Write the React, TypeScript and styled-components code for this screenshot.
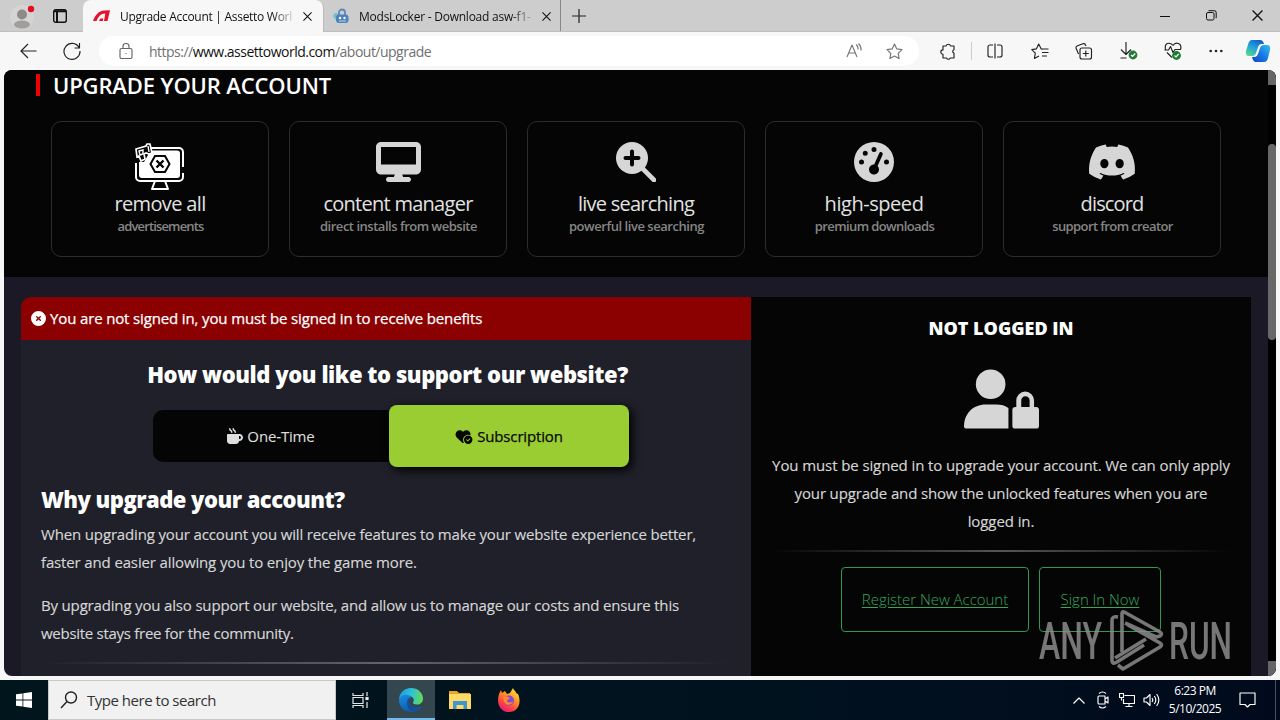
import type { ReactNode } from "react"
import styled, { createGlobalStyle } from "styled-components"
import { FaCircleXmark, FaDesktop, FaDiscord, FaGaugeHigh, FaHeartCircleCheck, FaMugHot } from "react-icons/fa6"

export default function App(){
    return(
        <Screen>
            <GlobalStyle />
            <TabStrip />
            <Toolbar />
            <Viewport>
                <Page>
                    <Hero>
                        <HeroTitle>UPGRADE YOUR ACCOUNT</HeroTitle>
                        <Features>
                            {features.map(item => (
                                <Feature key={item.title}>
                                    <FeatureIcon>{item.icon}</FeatureIcon>
                                    <FeatureTitle $ls={item.ls}>{item.title}</FeatureTitle>
                                    <FeatureText $ls={item.subLs}>{item.text}</FeatureText>
                                </Feature>
                            ))}
                        </Features>
                    </Hero>
                    <Columns>
                        <Support />
                        <Account />
                    </Columns>
                </Page>
                <Scrollbar>
                    <ScrollCap />
                    <ScrollThumb />
                    <ScrollCap />
                </Scrollbar>
                <Watermark />
            </Viewport>
            <Taskbar />
        </Screen>
    )
}

function TabStrip(){
    return(
        <Strip>
            <StripSlot $w={44}>
                <svg width="26" height="28" viewBox="0 0 26 28">
                    <circle cx="13" cy="15" r="12" fill="#d6d4d2" />
                    <circle cx="13" cy="12.5" r="5" fill="#8e8a88" />
                    <ellipse cx="13" cy="22.5" rx="8" ry="4" fill="#a09d9b" />
                    <circle cx="22" cy="7" r="3.2" fill="#e01020" />
                </svg>
            </StripSlot>
            <StripSlot $w={32}>
                <svg width="16" height="16" viewBox="0 0 16 16" fill="none" stroke="#111" strokeWidth="1.4">
                    <rect x="1.7" y="1.7" width="12.6" height="12.6" rx="2" />
                    <path d="M2 3.3h12M5 3v11" strokeWidth="2" />
                </svg>
            </StripSlot>
            <Tab $active>
                <svg width="17" height="12" viewBox="0 0 17 12" fill="#e8112d">
                    <path d="M0 11C2 5 6 .6 11 .4L17 .2l-2.500 10.800h-3.500l1.300-7.400C8 3.400 5.400 6.500 3.600 11z" />
                    <path d="M6 11l1.300-2.500h3l-.5 2.500z" />
                </svg>
                <TabTitle $ls="-0.28px">Upgrade Account | Assetto Worl</TabTitle>
                <CloseIcon size={9} />
            </Tab>
            <Tab>
                <svg width="16" height="16" viewBox="0 0 16 16">
                    <path d="M2 5l4 1v7l-4-2-2-3z" fill="#62c4c6" />
                    <path d="M6 7V4.5a3 3 0 0 1 6 0V7" fill="none" stroke="#5b87b8" strokeWidth="1.8" />
                    <rect x="3" y="6.5" width="12.5" height="8.5" rx="3" fill="#4d82bd" />
                    <circle cx="7" cy="10" r="1.2" fill="#fff" />
                    <circle cx="11.5" cy="10" r="1.2" fill="#fff" />
                    <path d="M6 13h7" stroke="#b9d7ec" />
                </svg>
                <TabTitle $ls="-0.24px">ModsLocker - Download asw-f1-</TabTitle>
                <CloseIcon size={9} />
            </Tab>
            <StripSlot $w={36}>
                <svg width="14" height="14" viewBox="0 0 14 14" stroke="#222" strokeWidth="1.2"><path d="M7 0v14M0 7h14" /></svg>
            </StripSlot>
            <Spacer />
            <StripSlot $w={46}>
                <svg width="10" height="10" viewBox="0 0 10 10" stroke="#111"><path d="M0 5.5h10" /></svg>
            </StripSlot>
            <StripSlot $w={46}>
                <svg width="11" height="11" viewBox="0 0 11 11" fill="none" stroke="#111">
                    <rect x=".5" y="2.5" width="7.5" height="7.5" rx="1.5" />
                    <path d="M2.5 .7h5.5a2 2 0 0 1 2.2 2.2v5.3" />
                </svg>
            </StripSlot>
            <StripSlot $w={46}><CloseIcon size={11} /></StripSlot>
        </Strip>
    )
}

function Toolbar(){
    return(
        <Bar>
            <Slot $w={44}><Line w={17} h={16} d="M16.5 8H1M8 1L1 8l7 7" /></Slot>
            <Slot $w={44}><Line w={18} h={18} d="M16 5.5A8 8 0 1 0 17 9M16.5 1v5h-5" /></Slot>
            <Address>
                <Line w={14} h={16} color="#666" d="M2.5 5.5h9a1.5 1.5 0 0 1 1.5 1.5v7a1.5 1.5 0 0 1-1.5 1.5h-9A1.5 1.5 0 0 1 1 14V7a1.5 1.5 0 0 1 1.5-1.5zM4 5.5V3.500a3 3 0 0 1 6 0v2M6.500 10.500h1" />
                <Url>https://<b>www.assettoworld.com</b>/about/upgrade</Url>
                <Slot $w={40}><Line w={17} h={16} color="#777" d="M1 14L6 2l5 12M3 10h6M10 1.5q2.5 2 2 5M12.5.5q3 3 2.5 7" /></Slot>
                <Slot $w={40}><Line w={17} h={17} color="#777" d="M8.5 1l2.3 4.9 5.2.7-3.8 3.7.9 5.3-4.6-2.5-4.6 2.5.9-5.3L1 6.6l5.2-.7z" /></Slot>
            </Address>
            <Slot $w={44}><Line w={17} h={17} d="M3 3h3.2a2.2 2.2 0 0 1 4.3 0H14v3.8a1.7 1.7 0 0 0 0 3.3V15h-3.8a2 2 0 0 1-3.7 0H3v-3.7a2.2 2.2 0 0 1 0-4.4z" /></Slot>
            <Separator />
            <Slot $w={45}><Line w={16} h={16} d="M6 2H3a2 2 0 0 0-2 2v8a2 2 0 0 0 2 2h3M10 2h3a2 2 0 0 1 2 2v8a2 2 0 0 1-2 2h-3M8 .5v15" /></Slot>
            <Slot $w={45}><Line w={18} h={17} d="M11.5 6.200l-1.300-.3L7.700 1 5.300 5.900.8 6.600l3.500 3.600-.9 5.200L8 13M11 6h6.500M11 9.500h6.500M11 13h5" /></Slot>
            <Slot $w={44}><Line w={18} h={17} d="M3.500 11L1 5a2 2 0 0 1 1-2l6-2.300a2 2 0 0 1 2.500 1.200L11 3M7 5h7.500a2 2 0 0 1 2 2v7a2 2 0 0 1-2 2H7a2 2 0 0 1-2-2V7a2 2 0 0 1 2-2zM10.800 7.500v6M7.800 10.500h6" /></Slot>
            <Slot $w={46}>
                <Line w={20} h={18} d="M7 0v12M2 7.500l5 5 5-5M1.500 16h6"><Check cx={14} cy={13} /></Line>
            </Slot>
            <Slot $w={41}>
                <Line w={18} h={18} d="M9 3.500Q6.500.5 3.500 1.500T1.500 7.500M16.500 7.500Q18 3 14.500 1.500T9 3.500M.5 8h4l2-3.500 2.500 6L11 7.500h6M3 10.500l5 5"><Check cx={12.5} cy={13.5} /></Line>
            </Slot>
            <Slot $w={45}><svg width="14" height="4" fill="#222"><circle cx="1.7" cy="2" r="1.3" /><circle cx="7" cy="2" r="1.3" /><circle cx="12.3" cy="2" r="1.3" /></svg></Slot>
            <Slot $w={40}>
                <svg width="26" height="24" viewBox="0 0 26 24">
                    <defs>
                        <linearGradient id="cop1" x1="0.8" y1="0" x2="0.2" y2="1"><stop stopColor="#1857c0" /><stop offset=".5" stopColor="#1ea3dc" /><stop offset="1" stopColor="#5bd68e" /></linearGradient>
                        <linearGradient id="cop2" x1="1" y1="0" x2="0" y2="1"><stop stopColor="#30c5f0" /><stop offset=".5" stopColor="#1878e8" /><stop offset="1" stopColor="#1048bd" /></linearGradient>
                    </defs>
                    <path d="M7 1h8q3 0 4 4h-3q-2 0-3 3l-2 6q-1 3-4 3H4Q0 17 1 12L3.500 4Q4.500 1 7 1z" fill="url(#cop1)" />
                    <path d="M19 23h-8q-3 0-4-5h3q2 0 3-3l2-6q1-3 4-3h3q4 0 3 5l-2 8q-1 4-4 4z" fill="url(#cop2)" />
                </svg>
            </Slot>
        </Bar>
    )
}

function Support(){
    return(
        <SupportPanel>
            <Alert><FaCircleXmark size={15} /><span>You are not signed in, you must be signed in to receive benefits</span></Alert>
            <SupportTitle>How would you like to support our website?</SupportTitle>
            <Options>
                <Option><FaMugHot size={16} /><span>One-Time</span></Option>
                <Option $selected><HeartIcon /><span>Subscription</span></Option>
            </Options>
            <WhyTitle>Why upgrade your account?</WhyTitle>
            <Paragraph>
                <Sentence $ls="-0.15px">When upgrading your account you will receive features to make your website experience better,</Sentence>
                <Sentence $ls="-0.14px">faster and easier allowing you to enjoy the game more.</Sentence>
            </Paragraph>
            <Paragraph>
                <Sentence $ls="-0.17px">By upgrading you also support our website, and allow us to manage our costs and ensure this</Sentence>
                <Sentence $ls="-0.28px">website stays free for the community.</Sentence>
            </Paragraph>
            <Divider $color="#62636b" />
        </SupportPanel>
    )
}

function Account(){
    return(
        <AccountPanel>
            <AccountTitle>NOT LOGGED IN</AccountTitle>
            <LockedUser />
            <AccountText>
                <Sentence $ls="-0.1px">You must be signed in to upgrade your account. We can only apply</Sentence>
                <Sentence $ls="-0.15px">your upgrade and show the unlocked features when you are</Sentence>
                <Sentence $ls="-0.08px">logged in.</Sentence>
            </AccountText>
            <Divider $color="#555" />
            <Links>
                <LinkButton $w={188} href="#">Register New Account</LinkButton>
                <LinkButton $w={122} href="#">Sign In Now</LinkButton>
            </Links>
        </AccountPanel>
    )
}

function Taskbar(){
    return(
        <Tasks>
            <TaskSlot $w={48}>
                <svg width="16" height="16" viewBox="0 0 16 16" fill="#fff"><path d="M0 2.300L6.500 1.400v6.200H0zM7.300 1.300L16 0v7.600H7.300zM0 8.400h6.500v6.200L0 13.700zM7.300 8.400H16V16l-8.700-1.300z" /></svg>
            </TaskSlot>
            <SearchBox>
                <svg width="18" height="18" viewBox="0 0 18 18" fill="none" stroke="#222" strokeWidth="1.4"><circle cx="11" cy="6.5" r="5.5" /><path d="M7 10.500L1 17" /></svg>
                <span>Type here to search</span>
            </SearchBox>
            <TaskSlot $w={48}>
                <svg width="17" height="17" viewBox="0 0 17 17" fill="none" stroke="#e6e6e6" strokeWidth="1.2">
                    <path d="M1 1v2.500h10V1M1 16v-2.500h10V16M1 5.500h10v6H1zM15 0v4M15 10v6" /><rect x="14" y="5.5" width="2" height="2" fill="#fff" />
                </svg>
            </TaskSlot>
            <TaskSlot $w={48} $active>
                <svg width="24" height="24" viewBox="0 0 24 24">
                    <defs>
                        <linearGradient id="edge1" x1="0" y1="0.5" x2="1" y2="0.6"><stop stopColor="#1f9be0" /><stop offset=".5" stopColor="#2fc2d8" /><stop offset="1" stopColor="#66dc4f" /></linearGradient>
                        <linearGradient id="edge2" x1="0" y1="0" x2="0.5" y2="1"><stop stopColor="#1b8fe0" /><stop offset="1" stopColor="#0d58ae" /></linearGradient>
                    </defs>
                    <path d="M0 12C0 5 5 0 12 0s12 5 12 10.500c0 4-3 6-6 6-2.500 0-4.500-1-4-2 2-3 0-6-4-6.500C6 7.500 1 9 0 12z" fill="url(#edge1)" />
                    <path d="M0 12c1-4 5-6 9-5 2 .5 3 1.500 3 2.500-3 2-3 6 0 8.500 3 2 7 2 9.500.5.5 0 .8.3.5.7C20 22 16.500 24 12.500 24 5 24 0 18.500 0 12z" fill="url(#edge2)" />
                    <path d="M8 14c0-2.500 1.500-4 3.500-4.500-2.500 3-1.500 7 1.500 9 2.500 1.500 6 1.500 8.500 0-2.500 3.500-6 5-9 4.500C9.500 22 8 18 8 14z" fill="#134f97" />
                </svg>
            </TaskSlot>
            <TaskSlot $w={49}>
                <svg width="22" height="20" viewBox="0 0 22 20">
                    <path d="M0 1h8l2 2h11v5H0z" fill="#e8a720" />
                    <path d="M0 4h22v15H0z" fill="#ffd968" />
                    <path d="M4 11h14v8h-3.500v-4h-7v4H4z" fill="#3f94d2" />
                </svg>
            </TaskSlot>
            <TaskSlot $w={49}>
                <svg width="24" height="24" viewBox="0 0 24 24">
                    <defs><linearGradient id="fox" x1="0.9" y1="0" x2="0.3" y2="1"><stop stopColor="#fff04a" /><stop offset=".4" stopColor="#ff9a22" /><stop offset=".75" stopColor="#ff4242" /><stop offset="1" stopColor="#e31b7c" /></linearGradient></defs>
                    <path d="M2 6l2-4 1 3 3-2 2 3 3-1 3-5c1 3 3 3 3 5l2 1c4 9 0 18-9 18S-1 15 2 6z" fill="url(#fox)" />
                    <circle cx="12" cy="12.5" r="5" fill="#8548dc" />
                    <path d="M6 9c4-1 5 0 7 1-1 2-3 1-3 3 1 2 4 2 6 0-1 5-8 5-9 0z" fill="#ff8b2c" />
                </svg>
            </TaskSlot>
            <Spacer />
            <TaskSlot $w={24}><Line w={12} h={7} color="#fff" d="M.5 6.500L6 1l5.500 5.500" /></TaskSlot>
            <TaskSlot $w={24}><Line w={14} h={18} color="#fff" d="M3 5h6v8H3q-1 0-1-1V6q0-1 1-1zM9 8l3-2v6l-3-2M3 2.500q3.500-3 7 0M3 15.500q3.500 3 7 0" /></TaskSlot>
            <TaskSlot $w={24}><Line w={16} h={16} color="#fff" d="M5.500 3.500H15.500V11.500H4.500V7M10 11.500v3M6.500 14.500h7M.5 1.500h4v4h-4zM2.500 5.500v3" /></TaskSlot>
            <TaskSlot $w={24}><Line w={17} h={14} color="#fff" d="M1 5h2.500L7 1.500v11L3.500 9H1zM9 5q1.500 2 0 4M11.300 3q3 4 0 8M13.600 1q4.500 6 0 12" /></TaskSlot>
            <Clock>
                <span>6:23 PM</span>
                <span>5/10/2025</span>
            </Clock>
            <TaskSlot $w={45}><Line w={17} h={16} color="#fff" d="M1 1h15v11.500h-5L8.500 15 6 12.500H1z" /></TaskSlot>
            <DesktopEdge />
        </Tasks>
    )
}

function Line({ w, h, d, color = "#222", children }: { w: number, h: number, d: string, color?: string, children?: ReactNode }){
    return(
        <svg width={w} height={h} viewBox={`0 0 ${w} ${h}`} fill="none" stroke={color} strokeWidth="1.15" strokeLinejoin="round">
            <path d={d} />
            {children}
        </svg>
    )
}

function Check({ cx, cy }: { cx: number, cy: number }){
    return(
        <g>
            <circle cx={cx} cy={cy} r="4.4" fill="#1e7b34" stroke="none" />
            <path d={`M${cx - 2} ${cy}l1.500 1.500 2.700-3`} stroke="#fff" />
        </g>
    )
}

function CloseIcon({ size }: { size: number }){
    return <svg width={size} height={size} viewBox="0 0 10 10" stroke="#111" strokeWidth="1.2"><path d="M.5.5l9 9M9.500.5l-9 9" /></svg>
}

function NoAdsIcon(){
    return(
        <svg width="50" height="47" viewBox="0 0 50 47" fill="none">
            <path d="M16 5h28a4 4 0 0 1 4 4v15M48 30v4a4 4 0 0 1-4 4H5a4 4 0 0 1-4-4V20" stroke="#fff" strokeWidth="2" />
            <path d="M17 7.500h25a3 3 0 0 1 3 3V32a3 3 0 0 1-3 3H7a3 3 0 0 1-3-3V19l5 0 4-7z" fill="#fff" />
            <path d="M20 38l-3 8h16l-3-8" stroke="#fff" strokeWidth="2" strokeLinejoin="round" />
            <path d="M20 13h10l4.500 8-4.500 8H20l-4.500-8z" stroke="#050505" strokeWidth="2" />
            <path d="M21.500 17.500l7 7M28.500 17.500l-7 7" stroke="#050505" strokeWidth="2.4" />
            <path d="M1 6l10-3 1-2 3 0 2 9-3 1-3-1-2 1 1 5-4 2-2-5-2 1z" fill="#050505" stroke="#fff" strokeWidth="1.7" />
            <path d="M4 8l4-1v4l-3 1zM13 3l1 6" stroke="#fff" strokeWidth="1.4" />
        </svg>
    )
}

function SearchPlusIcon(){
    return(
        <svg width="40" height="40" viewBox="0 0 40 40">
            <circle cx="16" cy="16" r="16" fill="currentColor" />
            <path d="M27 27l11 11" stroke="currentColor" strokeWidth="4.6" strokeLinecap="round" />
            <path d="M16 9.500v13M9.500 16h13" stroke="#050505" strokeWidth="4" strokeLinecap="round" />
        </svg>
    )
}

function LockedUser(){
    return(
        <svg width="75" height="60" viewBox="0 0 76 60" fill="#d6d6d6">
            <circle cx="27" cy="15" r="15" />
            <path d="M22 35.500h11q7 0 12 3.500v21H2q-2 0-2-2.500C0 45 9 35.500 22 35.500z" />
            <path d="M53 38v-6.500a9 9 0 0 1 18 0V38h2q3 0 3 3v16q0 3-3 3H52q-3 0-3-3V41q0-3 3-3zM58 38h8.500v-6.500a4.250 4.250 0 0 0-8.500 0z" />
        </svg>
    )
}

function Watermark(){
    return(
        <Mark width="196" height="62" viewBox="0 0 196 62">
            <text x="0" y="49" textLength="63" lengthAdjust="spacingAndGlyphs">ANY</text>
            <text x="130" y="49" textLength="63" lengthAdjust="spacingAndGlyphs">RUN</text>
            <g fill="none" stroke="currentColor" strokeWidth="3.6" strokeLinejoin="round">
                <path d="M79 7q-6-1-6 3v40q0 5 5 2l27-17" />
                <path d="M83 42V4q0-4 4-1l34 19q3 2 0 4l-4 1L86 13" />
                <path d="M79 55l5 4 37-22q3-2 0-4L89 15" />
                <path d="M76 48l31-19" />
            </g>
        </Mark>
    )
}

const GlobalStyle = createGlobalStyle`
    * {
        box-sizing: border-box;
    }

    body {
        margin: 0;
        overflow: hidden;
    }

    svg {
        flex-shrink: 0;
    }
`

const Screen = styled.div`
    display: flex;
    flex-direction: column;
    width: 1280px;
    height: 720px;
    overflow: hidden;
    background: #f7f7f7;
    font-family: "Open Sans", "Noto Sans", sans-serif;
    white-space: nowrap;
`

const Spacer = styled.div`
    flex: 1;
`

const Strip = styled.div`
    display: flex;
    height: 32px;
    background: #cdcdcd;
    border-bottom: 1px solid #bfbfbf;
`

const StripSlot = styled.div<{ $w: number }>`
    display: flex;
    align-items: center;
    justify-content: center;
    width: ${p => p.$w}px;
`

const Tab = styled.div<{ $active?: boolean }>`
    display: flex;
    align-items: center;
    gap: 10px;
    width: ${p => p.$active ? 241 : 237}px;
    height: ${p => p.$active ? 32 : 31}px;
    margin-left: ${p => p.$active ? 7 : 0}px;
    padding: ${p => p.$active ? "0 11px 0 10px" : "1px 9px 0"};
    background: ${p => p.$active ? "#f7f7f7" : "#cdcdcd"};
    border-radius: ${p => p.$active ? "8px 8px 0 0" : "0 0 0 8px"};
    border-right: 1px solid ${p => p.$active ? "#bbb" : "#888"};
`

const TabTitle = styled.span<{ $ls: string }>`
    flex: 1;
    font-size: 12px;
    letter-spacing: ${p => p.$ls};
    color: #111;
    mask-image: linear-gradient(90deg, #000 88%, transparent 102%);
`

const Bar = styled.div`
    display: flex;
    align-items: center;
    height: 38px;
    padding-left: 6px;
`

const Slot = styled.div<{ $w: number }>`
    display: flex;
    align-items: center;
    justify-content: center;
    width: ${p => p.$w}px;
`

const Separator = styled.div`
    width: 1px;
    height: 18px;
    margin-left: 1px;
    background: #ccc;
`

const Address = styled.div`
    display: flex;
    align-items: center;
    width: 820px;
    height: 30px;
    margin: 0 7px 0 5px;
    padding: 0 5px 0 20px;
    border-radius: 15px;
    background: #fff;
`

const Url = styled.span`
    flex: 1;
    margin-left: 16px;
    font-size: 14px;
    letter-spacing: -0.51px;
    color: #707070;

    b {
        color: #111;
        font-weight: 400;
    }
`

const Viewport = styled.main`
    display: flex;
    position: relative;
    width: 1272px;
    height: 606px;
    margin: 0 4px 4px;
    border-radius: 8px;
    overflow: hidden;
    background: #1a1925;
`

const Page = styled.div`
    width: 1264px;
`

const Hero = styled.section`
    height: 207px;
    padding: 4px 47px 0 32px;
    background: #050505;
`

const HeroTitle = styled.h1`
    height: 22px;
    margin: 0;
    padding-left: 13px;
    border-left: 4px solid #f00000;
    font-size: 22px;
    line-height: 22px;
    font-weight: 600;
    letter-spacing: -0.13px;
    color: #fff;
`

const Features = styled.div`
    display: flex;
    gap: 20px;
    margin: 25px 0 0 15px;
`

const Feature = styled.div`
    display: flex;
    flex-direction: column;
    align-items: center;
    width: 218px;
    height: 136px;
    padding-top: 20px;
    border: 1px solid #2c2c2c;
    border-radius: 10px;
`

const FeatureIcon = styled.div`
    display: flex;
    align-items: center;
    justify-content: center;
    height: 40px;
    color: #d6d6d6;
`

const NoAds = styled.div`
    height: 47px;
    margin-top: 9px;
`

const DesktopIcon = styled(FaDesktop)`
    width: 45px;
    height: 40px;
`

const DiscordIcon = styled(FaDiscord)`
    width: 50px;
    height: 40px;
`

const HeartIcon = styled(FaHeartCircleCheck)`
    width: 18px;
    height: 15px;
`

const FeatureTitle = styled.div<{ $ls: string }>`
    margin-top: 8px;
    font-size: 20px;
    line-height: 28px;
    letter-spacing: ${p => p.$ls};
    color: #e2e2e2;
`

const FeatureText = styled.div<{ $ls: string }>`
    padding-left: 1px;
    font-size: 13px;
    line-height: 16px;
    font-weight: 600;
    letter-spacing: ${p => p.$ls};
    color: #868686;
`

const Columns = styled.div`
    display: flex;
    height: 420px;
    padding: 20px 17px 0;
`

const SupportPanel = styled.section`
    display: flex;
    flex-direction: column;
    width: 730px;
    border-radius: 10px 0 0 0;
    overflow: hidden;
    background: #1f2029;
`

const Alert = styled.div`
    display: flex;
    align-items: center;
    gap: 4px;
    height: 43px;
    padding-left: 10px;
    background: #8b0000;
    color: #fff;
    font-size: 15px;
    letter-spacing: -0.14px;
    -webkit-text-stroke: 0.25px;

    span {
        margin-top: -2px;
    }
`

const SupportTitle = styled.h2`
    margin: 19px 0 0;
    padding-left: 3px;
    text-align: center;
    font-size: 22px;
    line-height: 30px;
    font-weight: 800;
    letter-spacing: -0.43px;
    color: #fff;
`

const Options = styled.div`
    display: flex;
    align-items: center;
    margin: 16px 0 0 132px;
`

const Option = styled.div<{ $selected?: boolean }>`
    display: flex;
    align-items: center;
    justify-content: center;
    gap: 4px;
    width: ${p => p.$selected ? 240 : 236}px;
    height: ${p => p.$selected ? 62 : 52}px;
    border-radius: ${p => p.$selected ? "8px" : "10px 0 0 10px"};
    background: ${p => p.$selected ? "#9acd32" : "#050505"};
    box-shadow: ${p => p.$selected ? "3px 3px 10px #000" : "none"};
    color: ${p => p.$selected ? "#080808" : "#dedede"};
    font-size: 15px;
    letter-spacing: -0.15px;

    span {
        -webkit-text-stroke: ${p => p.$selected ? "0.25px" : "0.1px"};
    }
`

const WhyTitle = styled.h3`
    margin: 16px 0 4px 20px;
    font-size: 22px;
    line-height: 33px;
    font-weight: 800;
    letter-spacing: -0.53px;
    color: #fff;
`

const Paragraph = styled.p`
    margin: 0 0 15px 20px;
    line-height: 28px;
`

const Sentence = styled.span<{ $ls: string }>`
    display: block;
    font-size: 15px;
    letter-spacing: ${p => p.$ls};
    color: #d6d6d6;
    -webkit-text-stroke: 0.15px;
`

const Divider = styled.div<{ $color: string }>`
    height: 2px;
    margin: 0 20px;
    align-self: stretch;
    flex-shrink: 0;
    background: linear-gradient(90deg, transparent, ${p => p.$color}, transparent);
`

const AccountPanel = styled.section`
    display: flex;
    flex-direction: column;
    align-items: center;
    width: 500px;
    background: #050505;
`

const AccountTitle = styled.h2`
    margin: 16px 0 26px;
    font-size: 18px;
    line-height: 30px;
    font-weight: 800;
    color: #fff;
`

const AccountText = styled.p`
    margin: 22px 0 15px;
    text-align: center;
    line-height: 28px;
`

const Links = styled.div`
    display: flex;
    gap: 10px;
    margin-top: 15px;
`

const LinkButton = styled.a<{ $w: number }>`
    display: flex;
    align-items: center;
    justify-content: center;
    width: ${p => p.$w}px;
    height: 65px;
    padding-bottom: 2px;
    border: 1px solid #2a9a54;
    border-radius: 4px;
    color: #34a85f;
    font-size: 15px;
    font-weight: 300;
    letter-spacing: -0.03px;
    text-decoration: underline;
    text-underline-offset: 2px;
`

const Scrollbar = styled.div`
    display: flex;
    flex-direction: column;
    justify-content: space-between;
    width: 8px;
    background: #000;
`

const ScrollCap = styled.div`
    height: 15px;
    background: #666;
`

const ScrollThumb = styled.div`
    height: 196px;
    margin: 59px 0 auto;
    border-radius: 4px;
    background: #686868;
`

const Mark = styled.svg`
    position: absolute;
    left: 1035px;
    top: 540px;
    overflow: visible;
    color: #8c8c8c;
    opacity: 0.85;

    text {
        fill: currentColor;
        font-family: Roboto, sans-serif;
        font-size: 51px;
        font-weight: 500;
    }
`

const Tasks = styled.footer`
    display: flex;
    height: 40px;
    background: linear-gradient(90deg, #01161c, #01121f 60%, #000a1c);
`

const TaskSlot = styled.div<{ $w: number, $active?: boolean }>`
    display: flex;
    align-items: center;
    justify-content: center;
    width: ${p => p.$w}px;
    margin-left: ${p => p.$active ? 3 : 0}px;
    background: ${p => p.$active ? "#34474e" : "transparent"};
    box-shadow: ${p => p.$active ? "inset 0 -2px #76b9ed" : "none"};
`

const SearchBox = styled.div`
    display: flex;
    align-items: center;
    gap: 9px;
    width: 288px;
    padding-left: 11px;
    background: #f1f1f1;
    border: 1px solid #c8c8c8;
    font-size: 15px;
    letter-spacing: -0.48px;
    color: #333;
`

const Clock = styled.div`
    display: flex;
    flex-direction: column;
    align-items: center;
    justify-content: center;
    width: 60px;
    margin-left: 2px;
    font-size: 12px;
    line-height: 18px;
    letter-spacing: -0.5px;
    color: #fff;
`

const DesktopEdge = styled.div`
    width: 5px;
    margin-left: 5px;
    border-left: 1px solid #4a525f;
`

const features = [
    { title: "remove all", text: "advertisements", icon: <NoAds><NoAdsIcon /></NoAds>, ls: "-0.65px", subLs: "-0.85px" },
    { title: "content manager", text: "direct installs from website", icon: <DesktopIcon />, ls: "-0.73px", subLs: "-0.48px" },
    { title: "live searching", text: "powerful live searching", icon: <SearchPlusIcon />, ls: "-0.75px", subLs: "-0.45px" },
    { title: "high-speed", text: "premium downloads", icon: <FaGaugeHigh size={40} />, ls: "-0.45px", subLs: "-0.6px" },
    { title: "discord", text: "support from creator", icon: <DiscordIcon />, ls: "-0.85px", subLs: "-0.6px" },
]
